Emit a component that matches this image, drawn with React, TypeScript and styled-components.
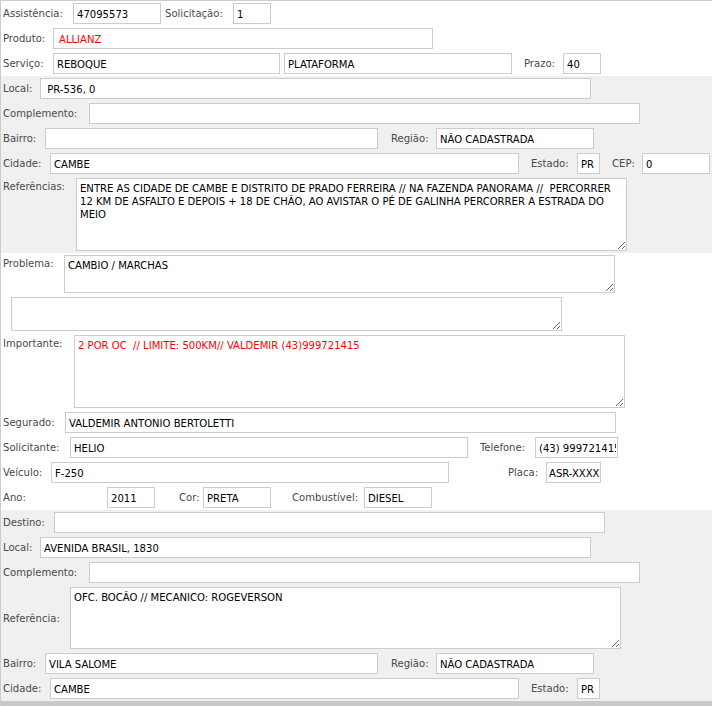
import React from "react";
import styled, { createGlobalStyle } from "styled-components";

const GlobalStyle = createGlobalStyle`
    html, body {
        margin: 0;
        padding: 0;
        background: #fff;
        overflow: hidden;
    }
    * {
        box-sizing: border-box;
    }
`;

const FONT = `"DejaVu Sans Condensed", Tahoma, "DejaVu Sans", sans-serif`;

const Sheet = styled.div`
    width: 100%;
    border-top: 1px solid #ccc;
    border-left: 1px solid #ccc;
    font-family: ${FONT};
    font-size: 11.2px;
    color: #4a4a4a;
`;

const Section = styled.div<{ $alt?: boolean }>`
    display: flex;
    flex-direction: column;
    background: ${p => (p.$alt ? "#f0f0f0" : "#fff")};
    padding-left: 2px;
`;

const Row = styled.div<{ $top?: boolean }>`
    display: flex;
    align-items: ${p => (p.$top ? "flex-start" : "center")};
    padding: 2px 0;
`;

const Label = styled.span<{ $w: number; $ml?: number; $top?: boolean }>`
    flex: none;
    width: ${p => p.$w}px;
    margin-left: ${p => p.$ml || 0}px;
    line-height: ${p => (p.$top ? "13px" : "21px")};
    padding-top: ${p => (p.$top ? "2px" : "0")};
    white-space: nowrap;
    overflow: hidden;
`;

const Input = styled.input<{ $w: number; $ml?: number; $red?: boolean; $pl?: number }>`
    flex: none;
    width: ${p => p.$w}px;
    height: 21px;
    margin: 0 0 0 ${p => p.$ml || 0}px;
    padding: 1px 1px 0 ${p => p.$pl ?? 3}px;
    border: 1px solid #ccc;
    border-radius: 0;
    background: #fff;
    font-family: ${FONT};
    font-size: 11.2px;
    color: ${p => (p.$red ? "#ff0000" : "#000")};
    outline: none;
`;

const TextArea = styled.textarea<{ $w: number; $h: number; $ml?: number; $red?: boolean }>`
    flex: none;
    display: block;
    width: ${p => p.$w}px;
    height: ${p => p.$h}px;
    margin: 0 0 0 ${p => p.$ml || 0}px;
    padding: 3px;
    border: 1px solid #ccc;
    border-radius: 0;
    background: #fff;
    font-family: ${FONT};
    font-size: 11.2px;
    line-height: 13px;
    color: ${p => (p.$red ? "#ff0000" : "#000")};
    white-space: pre;
    overflow: hidden;
    outline: none;
`;

const BottomBar = styled.div`
    height: 12px;
    background: #c8c8c8;
`;

const referencias =
    "ENTRE AS CIDADE DE CAMBE E DISTRITO DE PRADO FERREIRA // NA FAZENDA PANORAMA //  PERCORRER\n" +
    "12 KM DE ASFALTO E DEPOIS + 18 DE CHÃO, AO AVISTAR O PÉ DE GALINHA PERCORRER A ESTRADA DO\n" +
    "MEIO";

export default function App() {
    return (
        <>
            <GlobalStyle/>
            <Sheet>
                <Section>
                    <Row>
                        <Label $w={70}>Assistência:</Label>
                        <Input $w={88} value="47095573" readOnly/>
                        <Label $w={68} $ml={4}>Solicitação:</Label>
                        <Input $w={38} value="1" readOnly/>
                    </Row>
                    <Row>
                        <Label $w={50}>Produto:</Label>
                        <Input $w={380} $red $pl={5} value="ALLIANZ" readOnly/>
                    </Row>
                    <Row>
                        <Label $w={50}>Serviço:</Label>
                        <Input $w={227} value="REBOQUE" readOnly/>
                        <Input $w={228} $ml={4} value="PLATAFORMA" readOnly/>
                        <Label $w={39} $ml={12}>Prazo:</Label>
                        <Input $w={38} value="40" readOnly/>
                    </Row>
                </Section>

                <Section $alt>
                    <Row>
                        <Label $w={37}>Local:</Label>
                        <Input $w={551} value=" PR-536, 0" readOnly/>
                    </Row>
                    <Row>
                        <Label $w={86}>Complemento:</Label>
                        <Input $w={551} value="" readOnly/>
                    </Row>
                    <Row>
                        <Label $w={42}>Bairro:</Label>
                        <Input $w={333} value="" readOnly/>
                        <Label $w={45} $ml={13}>Região:</Label>
                        <Input $w={158} value="NÃO CADASTRADA" readOnly/>
                    </Row>
                    <Row>
                        <Label $w={47}>Cidade:</Label>
                        <Input $w={469} value="CAMBE" readOnly/>
                        <Label $w={46} $ml={12}>Estado:</Label>
                        <Input $w={23} value="PR" readOnly/>
                        <Label $w={30} $ml={12}>CEP:</Label>
                        <Input $w={68} value="0" readOnly/>
                    </Row>
                    <Row $top>
                        <Label $w={73} $top>Referências:</Label>
                        <TextArea $w={551} $h={73} value={referencias} readOnly/>
                    </Row>
                </Section>

                <Section>
                    <Row $top>
                        <Label $w={61} $top>Problema:</Label>
                        <TextArea $w={551} $h={38} value="CAMBIO / MARCHAS" readOnly/>
                    </Row>
                    <Row>
                        <TextArea $w={551} $h={34} $ml={8} value="" readOnly/>
                    </Row>
                    <Row $top>
                        <Label $w={71} $top>Importante:</Label>
                        <TextArea $w={551} $h={73} $red value="2 POR OC  // LIMITE: 500KM// VALDEMIR (43)999721415" readOnly/>
                    </Row>
                    <Row>
                        <Label $w={62}>Segurado:</Label>
                        <Input $w={551} value="VALDEMIR ANTONIO BERTOLETTI" readOnly/>
                    </Row>
                    <Row>
                        <Label $w={67}>Solicitante:</Label>
                        <Input $w={398} value="HELIO" readOnly/>
                        <Label $w={55} $ml={12}>Telefone:</Label>
                        <Input $w={83} value="(43) 999721415" readOnly/>
                    </Row>
                    <Row>
                        <Label $w={48}>Veículo:</Label>
                        <Input $w={398} value="F-250" readOnly/>
                        <Label $w={38} $ml={59}>Placa:</Label>
                        <Input $w={55} $pl={2} value="ASR-XXXX" readOnly/>
                    </Row>
                    <Row>
                        <Label $w={104}>Ano:</Label>
                        <Input $w={48} value="2011" readOnly/>
                        <Label $w={24} $ml={24}>Cor:</Label>
                        <Input $w={68} value="PRETA" readOnly/>
                        <Label $w={72} $ml={21}>Combustível:</Label>
                        <Input $w={68} value="DIESEL" readOnly/>
                    </Row>
                </Section>

                <Section $alt>
                    <Row>
                        <Label $w={51}>Destino:</Label>
                        <Input $w={551} value="" readOnly/>
                    </Row>
                    <Row>
                        <Label $w={37}>Local:</Label>
                        <Input $w={551} value="AVENIDA BRASIL, 1830" readOnly/>
                    </Row>
                    <Row>
                        <Label $w={86}>Complemento:</Label>
                        <Input $w={551} value="" readOnly/>
                    </Row>
                    <Row>
                        <Label $w={67}>Referência:</Label>
                        <TextArea $w={551} $h={62} value="OFC. BOCÃO // MECANICO: ROGEVERSON" readOnly/>
                    </Row>
                    <Row>
                        <Label $w={42}>Bairro:</Label>
                        <Input $w={333} value="VILA SALOME" readOnly/>
                        <Label $w={45} $ml={13}>Região:</Label>
                        <Input $w={158} value="NÃO CADASTRADA" readOnly/>
                    </Row>
                    <Row>
                        <Label $w={47}>Cidade:</Label>
                        <Input $w={469} value="CAMBE" readOnly/>
                        <Label $w={46} $ml={12}>Estado:</Label>
                        <Input $w={23} value="PR" readOnly/>
                    </Row>
                </Section>
                <BottomBar/>
            </Sheet>
        </>
    );
}
